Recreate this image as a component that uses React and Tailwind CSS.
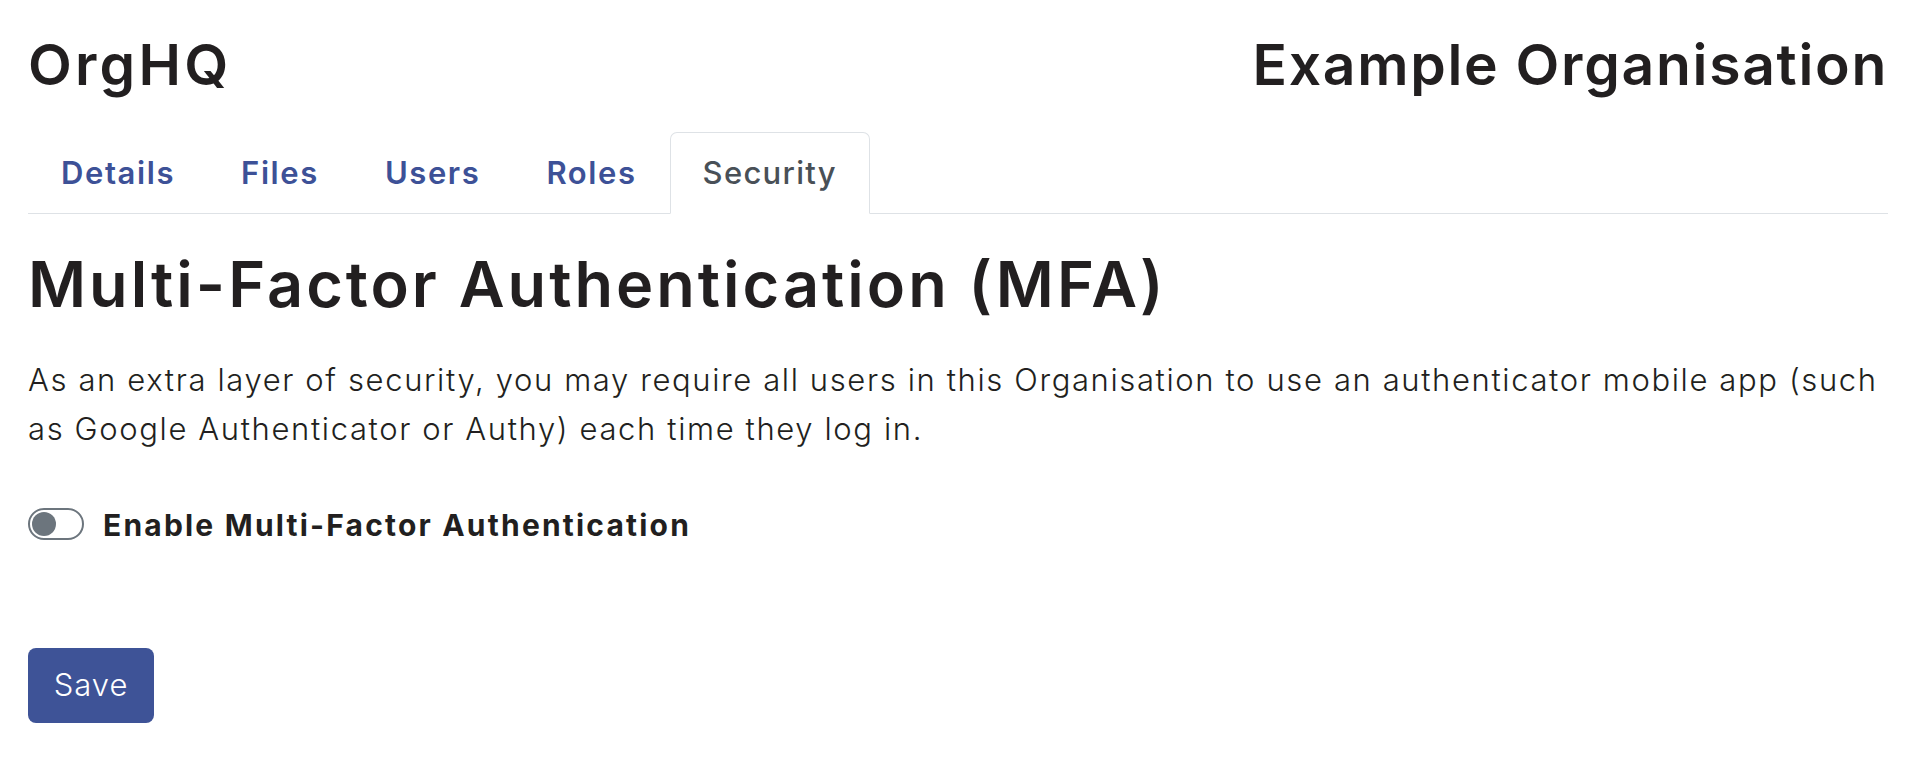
import { useState } from "react";

const tabs = ["Details", "Files", "Users", "Roles", "Security"];

function App() {
  const [activeTab, setActiveTab] = useState("Security");
  const [mfaEnabled, setMfaEnabled] = useState(false);

  return (
    <div className="min-h-screen bg-white pl-[28px] pr-[24px] text-[#221f20] font-['Inter',sans-serif]">
      <div className="flex items-baseline justify-between pt-[36px]">
        <h1 className="text-[57px] font-semibold leading-none tracking-[3.2px]">OrgHQ</h1>
        <h2 className="text-[57px] font-semibold leading-none tracking-[1.7px]">Example Organisation</h2>
      </div>

      <div className="flex border-b border-[#dee2e6] mt-[39px]">
        {tabs.map((tab) => (
          <button
            key={tab}
            onClick={() => setActiveTab(tab)}
            className={
              tab === activeTab
                ? "-mb-px flex h-[82px] items-center rounded-t-[7px] border border-[#dee2e6] border-b-white bg-white px-[32px] text-[31px] font-medium tracking-[1.3px] text-[#495057]"
                : "-mb-px flex h-[82px] items-center rounded-t-[7px] border border-transparent px-[32px] text-[31px] font-semibold tracking-[1.6px] text-[#3d5197]"
            }
          >
            {tab}
          </button>
        ))}
      </div>

      <h3 className="mt-[39px] text-[63px] font-semibold leading-none tracking-[3px]">
        Multi-Factor Authentication (MFA)
      </h3>

      <p className="mt-[39px] text-[31px] font-light leading-[49px] tracking-[1.62px]">
        As an extra layer of security, you may require all users in this Organisation to use an authenticator mobile app (such
        as Google Authenticator or Authy) each time they log in.
      </p>

      <label className="mt-[55px] flex h-[32px] items-center gap-[19px] cursor-pointer">
        <span
          onClick={() => setMfaEnabled(!mfaEnabled)}
          className={
            mfaEnabled
              ? "flex h-[32px] w-[56px] items-center justify-end rounded-full border-2 border-[#3d5197] bg-[#3d5197] px-[2px]"
              : "flex h-[32px] w-[56px] items-center justify-start rounded-full border-2 border-[#6c757d] bg-white px-[2px]"
          }
        >
          <span className={mfaEnabled ? "h-[24px] w-[24px] rounded-full bg-white" : "h-[24px] w-[24px] rounded-full bg-[#6c757d]"}></span>
        </span>
        <span className="pt-[2px] text-[30px] font-bold leading-none tracking-[2.2px]">Enable Multi-Factor Authentication</span>
      </label>

      <button className="mt-[108px] h-[75px] w-[126px] rounded-[8px] bg-[#3e5397] text-[31px] font-light tracking-[1px] text-white">
        Save
      </button>
    </div>
  );
}

export default App;
